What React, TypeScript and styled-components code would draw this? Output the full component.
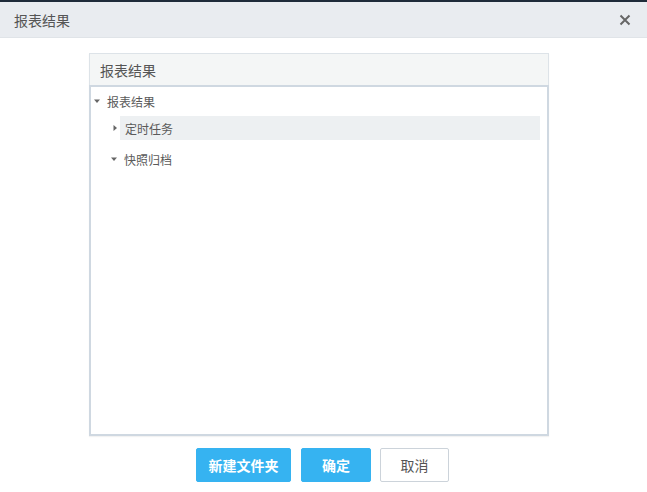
import React from "react";
import styled, { createGlobalStyle } from "styled-components";

const Global = createGlobalStyle`
  html, body { margin: 0; padding: 0; background: #fff; }
  body { font-family: "Microsoft YaHei", "Noto Sans CJK SC", "Liberation Sans", sans-serif; }
`;

const Dialog = styled.div`
  width: 647px;
  height: 492px;
  display: flex;
  flex-direction: column;
  background: #fff;
  border-top: 2px solid #1f2b3a;
  box-sizing: border-box;
`;

const Header = styled.div`
  height: 35px;
  display: flex;
  align-items: center;
  justify-content: space-between;
  padding: 0 14px;
  background: #e9ecf0;
  border-bottom: 1px solid #e0e4e8;
`;

const Title = styled.span`
  font-size: 14px;
  color: #555;
`;

const Close = styled.button`
  border: 0;
  background: none;
  padding: 0;
  margin-right: 2px;
  display: flex;
  cursor: pointer;
`;

const Body = styled.div`
  flex: 1;
  display: flex;
  flex-direction: column;
  padding-top: 15px;
  padding-left: 89px;
`;

const Panel = styled.div`
  width: 460px;
  display: flex;
  flex-direction: column;
  border: 1px solid #dde3e8;
  box-sizing: border-box;
  box-shadow: 0 1px 1px rgba(0, 0, 0, 0.05);
`;

const PanelHead = styled.div`
  height: 31px;
  display: flex;
  align-items: center;
  padding-left: 10px;
  background: #f4f6f6;
  font-size: 14px;
  color: #555;
`;

const TreeBox = styled.div`
  height: 351px;
  border: 2px solid #cfd8e1;
  box-sizing: border-box;
  margin: 0 -1px -1px -1px;
  padding: 2px 7px 0 0;
`;

const Row = styled.div<{ $indent: number; $active?: boolean }>`
  height: 24px;
  display: flex;
  align-items: center;
  padding-left: ${(p) => p.$indent}px;
  margin-top: ${(p) => (p.$active ? 3 : 0)}px;
  margin-bottom: ${(p) => (p.$active ? 7 : 0)}px;
  font-size: 12px;
  color: #5a5a5a;
`;

const Caret = styled.span<{ $w: number; $gap: number }>`
  width: ${(p) => p.$w}px;
  display: flex;
  align-items: center;
  justify-content: center;
  margin-right: ${(p) => p.$gap}px;
`;

const Label = styled.span<{ $active?: boolean }>`
  flex: ${(p) => (p.$active ? 1 : "none")};
  height: 24px;
  display: flex;
  align-items: center;
  padding-left: ${(p) => (p.$active ? 5 : 0)}px;
  background: ${(p) => (p.$active ? "#edf0f2" : "transparent")};
`;

const Footer = styled.div`
  display: flex;
  margin-top: 12px;
  margin-left: 107px;
`;

const Btn = styled.button<{ $primary?: boolean; $w: number; $gap: number }>`
  width: ${(p) => p.$w}px;
  height: 34px;
  margin-right: ${(p) => p.$gap}px;
  border-radius: 2px;
  border: 1px solid ${(p) => (p.$primary ? "#36b3f1" : "#ccd3da")};
  background: ${(p) => (p.$primary ? "#36b3f1" : "#fff")};
  color: ${(p) => (p.$primary ? "#fff" : "#555")};
  font-family: inherit;
  font-size: 14px;
  font-weight: ${(p) => (p.$primary ? 700 : 400)};
  padding: 0;
`;

const Down = () => (
  <svg width="8" height="6" viewBox="0 0 8 6">
    <path d="M1 1.5h6L4 5z" fill="#666" />
  </svg>
);
const Right = () => (
  <svg width="6" height="8" viewBox="0 0 6 8">
    <path d="M1.5 1v6L5 4z" fill="#666" />
  </svg>
);

export default function App() {
  return (
    <>
      <Global />
      <Dialog>
        <Header>
          <Title>报表结果</Title>
          <Close aria-label="close">
            <svg width="12" height="12" viewBox="0 0 12 12">
              <path d="M1.5 1.5l9 9M10.5 1.5l-9 9" stroke="#666" strokeWidth="2" />
            </svg>
          </Close>
        </Header>
        <Body>
          <Panel>
            <PanelHead>报表结果</PanelHead>
            <TreeBox>
              <Row $indent={0}>
                <Caret $w={12} $gap={4}><Down /></Caret>
                <Label>报表结果</Label>
              </Row>
              <Row $indent={19} $active>
                <Caret $w={10} $gap={0}><Right /></Caret>
                <Label $active>定时任务</Label>
              </Row>
              <Row $indent={17}>
                <Caret $w={12} $gap={4}><Down /></Caret>
                <Label>快照归档</Label>
              </Row>
            </TreeBox>
          </Panel>
          <Footer>
            <Btn $primary $w={95} $gap={10}>新建文件夹</Btn>
            <Btn $primary $w={70} $gap={9}>确定</Btn>
            <Btn $w={69} $gap={0}>取消</Btn>
          </Footer>
        </Body>
      </Dialog>
    </>
  );
}
